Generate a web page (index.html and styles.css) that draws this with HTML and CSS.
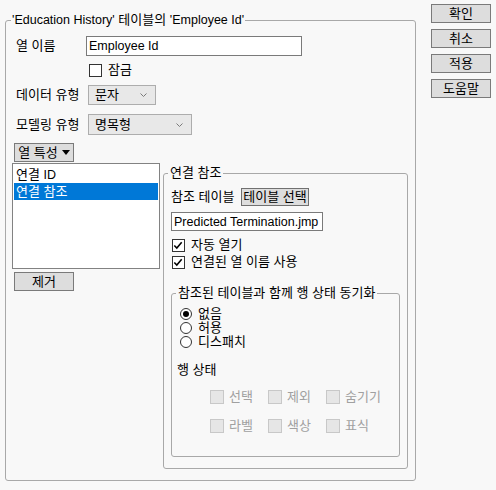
FILE: index.html
```html
<!DOCTYPE html>
<html lang="ko">
<head>
<meta charset="utf-8">
<link rel="stylesheet" href="styles.css">
</head>
<body>
<div class="page">
  <fieldset class="group main">
    <legend><span class="lat">'Education History'</span> 테이블의 <span class="lat">'Employee Id'</span></legend>
    <div class="row r-name">
      <span class="lbl">열 이름</span>
      <div class="field name-field"><span class="lat">Employee Id</span></div>
    </div>
    <div class="row r-lock">
      <span class="cb"></span><span class="cb-label">잠금</span>
    </div>
    <div class="row r-type">
      <span class="lbl wide">데이터 유형</span>
      <div class="combo combo-s"><span>문자</span><svg width="7" height="4" viewBox="0 0 7 4"><path d="M0.5 0.5 L3.5 3.5 L6.5 0.5" stroke="#7a7a7a" fill="none"/></svg></div>
    </div>
    <div class="row r-model">
      <span class="lbl wide">모델링 유형</span>
      <div class="combo combo-l"><span>명목형</span><svg width="7" height="4" viewBox="0 0 7 4"><path d="M0.5 0.5 L3.5 3.5 L6.5 0.5" stroke="#7a7a7a" fill="none"/></svg></div>
    </div>
    <div class="row r-prop">
      <div class="btn prop-btn">열 특성 <svg width="8" height="5" viewBox="0 0 8 5"><path d="M0 0 H8 L4 5 Z" fill="#000"/></svg></div>
    </div>
    <div class="bottom">
      <div class="leftcol">
        <div class="listbox">
          <div class="item">연결 <span class="lat">ID</span></div>
          <div class="item sel">연결 참조</div>
        </div>
        <div class="btn remove-btn">제거</div>
      </div>
      <fieldset class="group link">
        <legend>연결 참조</legend>
        <div class="row r-ref">
          <span class="ref-lbl">참조 테이블</span>
          <div class="btn pick-btn">테이블 선택</div>
        </div>
        <div class="field file-field"><span class="lat">Predicted Termination.jmp</span></div>
        <div class="row r-chk first">
          <span class="cb checked"><svg width="13" height="13" viewBox="0 0 13 13"><path d="M2.5 6.5 L5.2 9.3 L10.5 3" stroke="#000" stroke-width="1.7" fill="none"/></svg></span><span class="cb-label">자동 열기</span>
        </div>
        <div class="row r-chk">
          <span class="cb checked"><svg width="13" height="13" viewBox="0 0 13 13"><path d="M2.5 6.5 L5.2 9.3 L10.5 3" stroke="#000" stroke-width="1.7" fill="none"/></svg></span><span class="cb-label">연결된 열 이름 사용</span>
        </div>
        <fieldset class="group sync">
          <legend>참조된 테이블과 함께 행 상태 동기화</legend>
          <div class="radios">
            <div class="radio-row"><span class="radio on"></span><span>없음</span></div>
            <div class="radio-row"><span class="radio"></span><span>허용</span></div>
            <div class="radio-row"><span class="radio"></span><span>디스패치</span></div>
          </div>
          <div class="rs-title">행 상태</div>
          <div class="states">
            <div class="st"><span class="cb dis"></span><span>선택</span></div>
            <div class="st"><span class="cb dis"></span><span>제외</span></div>
            <div class="st"><span class="cb dis"></span><span>숨기기</span></div>
          </div>
          <div class="states second">
            <div class="st"><span class="cb dis"></span><span>라벨</span></div>
            <div class="st"><span class="cb dis"></span><span>색상</span></div>
            <div class="st"><span class="cb dis"></span><span>표식</span></div>
          </div>
        </fieldset>
      </fieldset>
    </div>
  </fieldset>
  <div class="side">
    <div class="btn side-btn">확인</div>
    <div class="btn side-btn">취소</div>
    <div class="btn side-btn">적용</div>
    <div class="btn side-btn">도움말</div>
  </div>
</div>
</body>
</html>
```

FILE: styles.css
```css
* { box-sizing: border-box; }
html, body { margin: 0; padding: 0; }
body {
  background: #f8f8f8;
  font-family: "Liberation Sans", "Noto Sans CJK KR", sans-serif;
  font-size: 13px;
  line-height: 16px;
  color: #000;
  width: 496px;
  height: 490px;
  overflow: hidden;
}
.lat { font-size: 12.5px; }
.page { display: flex; align-items: flex-start; }

.group {
  border: 1px solid #a8a8a8;
  border-radius: 3px;
  margin: 0;
  min-width: 0;
}
.group legend { line-height: 16px; padding: 0 2px; }

.main {
  margin: 12px 0 0 5px;
  width: 411px;
  height: 469px;
  padding: 0 6px 0 6px;
}
.main > legend { margin-left: -1px; padding: 0 1px; }

.row { display: flex; align-items: center; }
.lbl { width: 74px; padding-left: 4px; }
.lbl.wide { width: 76px; }

.field {
  background: #fff;
  border: 1px solid #7a7a7a;
  padding: 0 2px;
  white-space: nowrap;
}
.name-field { width: 216px; height: 20px; line-height: 18px; }

.r-name { height: 20px; margin-top: 8px; }
.r-lock { height: 18px; margin-top: 5px; padding-left: 77px; }
.r-type { height: 20px; margin-top: 6px; }
.r-model { height: 21px; margin-top: 9px; }
.r-prop { margin-top: 8px; }

.cb {
  width: 13px; height: 13px;
  border: 1px solid #333;
  background: #fff;
  display: inline-flex;
  flex: none;
}
.cb svg { margin: -1px 0 0 -1px; }
.cb-label { margin-left: 6px; }

.combo {
  height: 100%;
  border: 1px solid #adadad;
  background: #e8e8e8;
  display: flex;
  align-items: center;
  justify-content: space-between;
  padding: 0 8px 0 6px;
}
.combo-s { width: 68px; }
.combo-l { width: 104px; }

.btn {
  background: #dddddd;
  border: 1px solid #7a7a7a;
  display: flex;
  align-items: center;
  justify-content: center;
  white-space: nowrap;
}
.prop-btn { width: 60px; height: 19px; margin-left: 2px; gap: 4px; }

.bottom { display: flex; align-items: flex-start; margin-top: 1px; }
.leftcol { width: 148px; flex: none; }
.listbox {
  height: 106px;
  background: #fff;
  border: 1px solid #828282;
  padding: 2px 1px;
}
.item { height: 17px; line-height: 17px; padding-left: 2px; }
.item.sel { background: #0078d7; color: #fff; }
.remove-btn { width: 60px; height: 19px; margin: 3px 0 0 2px; }

.link {
  margin: 2px 0 0 3px;
  width: 245px;
  height: 304px;
  padding: 0 9px 0 7px;
  flex: none;
}
.link > legend { margin-left: -3px; }
.r-ref { height: 18px; margin-top: 7px; }
.ref-lbl { width: 70px; }
.pick-btn { width: 68px; height: 18px; border-color: #707070; }
.file-field { width: 152px; height: 19px; line-height: 17px; margin-top: 6px; }
.r-chk { height: 16px; margin-left: 1px; margin-top: 1px; }
.r-chk.first { margin-top: 6px; }

.sync {
  margin-top: 15px;
  width: 229px;
  height: 172px;
  padding: 0 8px 0 8px;
}
.sync > legend { margin-left: -4px; }
.radios { margin-top: 6px; }
.radio-row { display: flex; align-items: center; height: 14px; line-height: 14px; }
.radio {
  width: 12px; height: 12px;
  border: 1px solid #333;
  border-radius: 50%;
  background: #fff;
  margin-right: 6px;
  display: inline-flex;
  align-items: center;
  justify-content: center;
}
.radio.on::after {
  content: "";
  width: 6px; height: 6px;
  border-radius: 50%;
  background: #000;
}
.rs-title { line-height: 16px; margin: 13px 0 0 -3px; }
.states { display: flex; margin: 11px 0 0 30px; height: 16px; }
.states.second { margin-top: 13px; }
.st { width: 58px; display: flex; align-items: center; color: #a0a0a0; }
.cb.dis { width: 14px; height: 14px; background: #e6e6e6; border-color: #c8c8c8; margin-right: 5px; }

.side {
  margin: 4px 0 0 15px;
  display: flex;
  flex-direction: column;
  gap: 6px;
}
.side-btn { width: 60px; height: 19px; }
```
